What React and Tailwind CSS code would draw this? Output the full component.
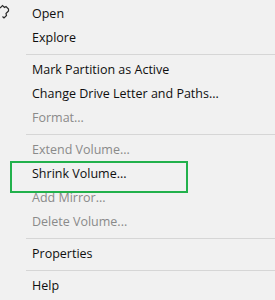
const items = [
  { label: 'Open' },
  { label: 'Explore' },
  { sep: true },
  { label: 'Mark Partition as Active' },
  { label: 'Change Drive Letter and Paths...' },
  { label: 'Format...', disabled: true },
  { sep: true },
  { label: 'Extend Volume...', disabled: true },
  { label: 'Shrink Volume...', highlight: true },
  { label: 'Add Mirror...', disabled: true },
  { label: 'Delete Volume...', disabled: true },
  { sep: true },
  { label: 'Properties' },
  { sep: true },
  { label: 'Help' },
];

function Cursor() {
  // hand pointer, mostly cut off by the left edge
  return (
    <svg
      className="absolute left-0 top-[3px]"
      width="11"
      height="17"
      viewBox="0 0 11 17"
      fill="none"
      stroke="#2a2a2a"
      strokeWidth="1.2"
    >
      <path d="M0 5 L2.5 2.5 L4.5 4.5 L6 3.5 L8.5 6 L8.5 8 L6 10.5 L6.5 12.5 L4 15 L2.5 13.5" />
    </svg>
  );
}

export default function App() {
  return (
    <div className="relative w-[275px] h-[300px] overflow-hidden bg-[#f1f1f1] pt-[2px] font-['Open_Sans',sans-serif] text-[12.5px] text-[#0f0f0f]">
      <Cursor />
      {items.map((item, i) =>
        item.sep ? (
          <div key={i} className="flex h-[8px] items-center pl-[26px]">
            <div className="h-px w-full bg-[#d6d6d6]" />
          </div>
        ) : (
          <div
            key={i}
            className={`flex h-[24px] items-center pl-[32px] ${
              item.disabled ? 'text-[#8a8a8a]' : ''
            }`}
          >
            {item.label}
          </div>
        )
      )}
      <div className="absolute left-[10px] top-[161px] h-[32px] w-[178px] border-2 border-[#22b14c]" />
    </div>
  );
}
